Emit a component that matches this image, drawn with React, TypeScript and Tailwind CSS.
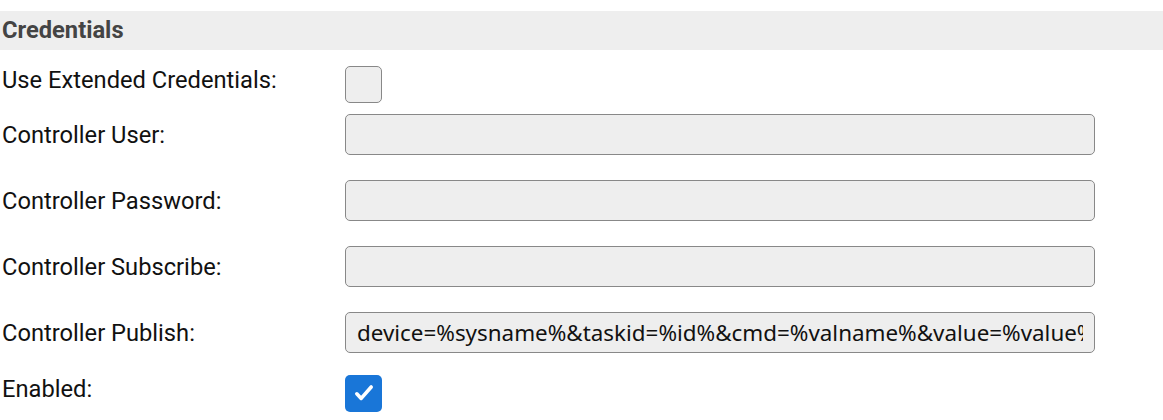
import React from "react";

const labelCls = "w-[345px] shrink-0 pl-[2px] text-[23.7px] leading-[28px] text-[#111]";
const inputCls =
  "h-[41px] w-[750px] rounded-[5px] border border-[#888] bg-[#eee] px-[11px] text-[22.4px] text-[#111] outline-none";

const TextRow = ({ label, value, mt }: { label: string; value?: string; mt: string }) => (
  <div className={`flex items-center ${mt}`}>
    <div className={labelCls}>{label}</div>
    <input className={inputCls} style={{ fontFamily: '"Noto Sans", sans-serif' }} defaultValue={value ?? ""} />
  </div>
);

const Check = ({ checked }: { checked?: boolean }) =>
  checked ? (
    <div className="flex h-[37px] w-[37px] items-center justify-center rounded-[5px] bg-[#1976d8]">
      <svg width="24" height="24" viewBox="0 0 24 24">
        <path d="M4.8 11.8 L9.2 16.4 L19.2 5" fill="none" stroke="#fff" strokeWidth="3.6" strokeLinecap="round" strokeLinejoin="round" />
      </svg>
    </div>
  ) : (
    <div className="h-[37px] w-[37px] rounded-[5px] border border-[#888] bg-[#eee]" />
  );

export default function App() {
  return (
    <div className="h-[420px] w-[1163px] overflow-hidden bg-white pt-[11px]" style={{ fontFamily: "Roboto, sans-serif" }}>
      <div className="flex h-[39px] items-center bg-[#eee] pl-[2px] text-[23.7px] font-bold text-[#444]">Credentials</div>
      <div className="mt-[16px] flex items-start">
        <div className={labelCls}>Use Extended Credentials:</div>
        <Check />
      </div>
      <TextRow label="Controller User:" mt="mt-[11px]" />
      <TextRow label="Controller Password:" mt="mt-[25px]" />
      <TextRow label="Controller Subscribe:" mt="mt-[25px]" />
      <TextRow
        label="Controller Publish:"
        mt="mt-[25px]"
        value="device=%sysname%&taskid=%id%&cmd=%valname%&value=%value%"
      />
      <div className="mt-[22px] flex items-start">
        <div className={labelCls}>Enabled:</div>
        <Check checked />
      </div>
    </div>
  );
}
